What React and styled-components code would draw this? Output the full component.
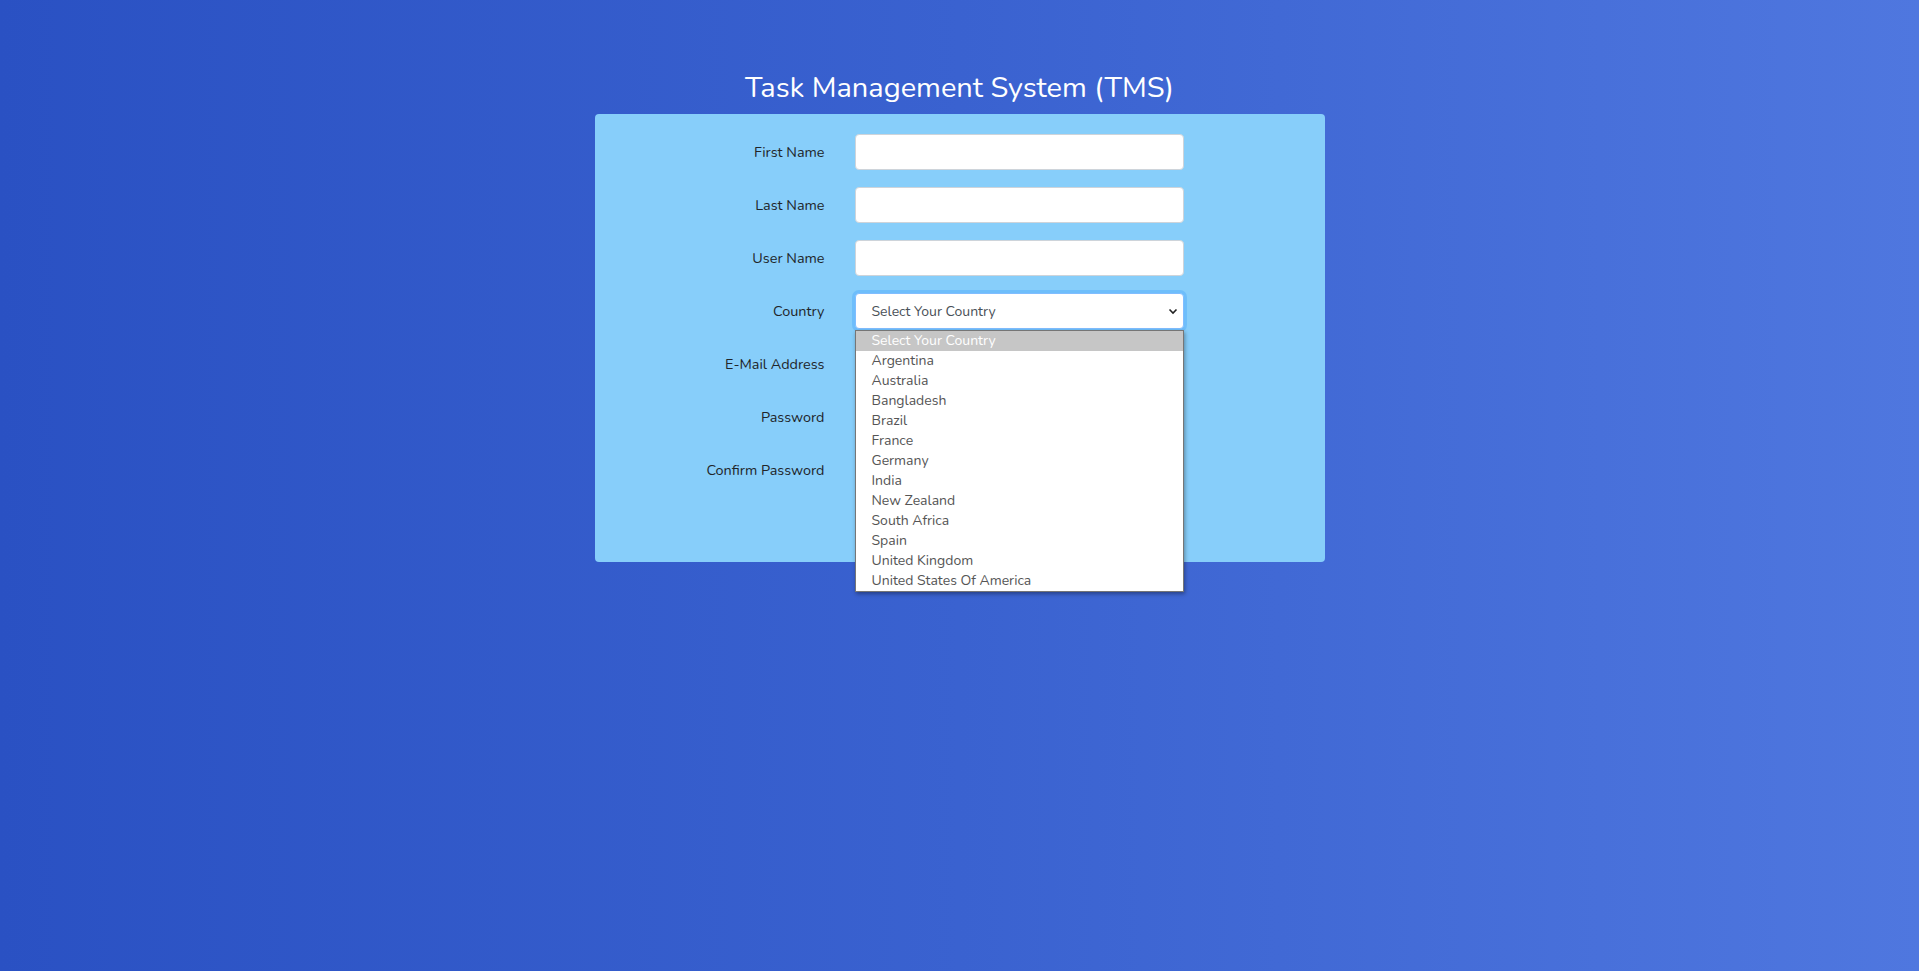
import React from "react";
import styled, { createGlobalStyle } from "styled-components";

const Global = createGlobalStyle`
  html, body { margin: 0; padding: 0; }
  body {
    font-family: Nunito, Lato, "Open Sans", "Liberation Sans", sans-serif;
    -webkit-font-smoothing: antialiased;
  }
  * { box-sizing: border-box; }
`;

const Page = styled.div`
  min-height: 971px;
  background: linear-gradient(to right, #2a51c3 0%, #3a62d0 50%, #4f77df 100%);
  padding-top: 70px;
  display: flex;
  flex-direction: column;
  align-items: center;
`;

const Title = styled.h1`
  margin: 0 0 8px;
  font-size: 29px;
  line-height: 36px;
  font-weight: 400;
  color: #ffffff;
`;

const Card = styled.form`
  width: 730px;
  height: 448px;
  background: #87cefa;
  border-radius: 4px;
  padding-top: 20px;
  display: flex;
  flex-direction: column;
  gap: 17px;
`;

const Row = styled.div`
  display: grid;
  grid-template-columns: 230px 329px;
  column-gap: 30px;
  align-items: center;
`;

const Label = styled.label`
  text-align: right;
  font-size: 14.4px;
  color: #212529;
`;

const Input = styled.input`
  height: 36px;
  width: 100%;
  border: 1px solid #ced4da;
  border-radius: 4px;
  background: #fff;
  padding: 0 15px;
  font-family: inherit;
  font-size: 14px;
  outline: none;
`;

const SelectWrap = styled.div`
  position: relative;
  width: 100%;
`;

const SelectBox = styled.div`
  height: 36px;
  border: 1px solid #80bdff;
  border-radius: 4px;
  background: #fff;
  box-shadow: 0 0 0 3px rgba(0, 123, 255, 0.18);
  padding: 0 5px 0 16px;
  display: flex;
  align-items: center;
  justify-content: space-between;
  font-size: 14px;
  color: #495057;
`;

const Chevron = styled.svg`
  width: 10px;
  height: 10px;
`;

const Dropdown = styled.ul`
  position: absolute;
  top: 37px;
  left: 0;
  right: 0;
  margin: 0;
  padding: 0;
  list-style: none;
  background: #fff;
  border: 1px solid #767676;
  box-shadow: 1px 2px 4px rgba(0, 0, 0, 0.35);
  z-index: 10;
`;

const Option = styled.li`
  height: 20px;
  line-height: 20px;
  padding-left: 16px;
  font-size: 14px;
  color: ${(p) => (p.$active ? "#ffffff" : "#555555")};
  background: ${(p) => (p.$active ? "#c6c6c6" : "transparent")};
`;

const countries = [
  "Argentina",
  "Australia",
  "Bangladesh",
  "Brazil",
  "France",
  "Germany",
  "India",
  "New Zealand",
  "South Africa",
  "Spain",
  "United Kingdom",
  "United States Of America",
];

const fields = [
  ["First Name", "text"],
  ["Last Name", "text"],
  ["User Name", "text"],
  ["Country", "select"],
  ["E-Mail Address", "email"],
  ["Password", "password"],
  ["Confirm Password", "password"],
];

export default function App() {
  return (
    <>
      <Global />
      <Page>
        <Title>Task Management System (TMS)</Title>
        <Card onSubmit={(e) => e.preventDefault()}>
          {fields.map(([label, type]) => (
            <Row key={label}>
              <Label>{label}</Label>
              {type === "select" ? (
                <SelectWrap>
                  <SelectBox>
                    <span>Select Your Country</span>
                    <Chevron viewBox="0 0 10 10">
                      <path d="M1.5 3.5 L5 7 L8.5 3.5" fill="none" stroke="#222" strokeWidth="1.6" />
                    </Chevron>
                  </SelectBox>
                  <Dropdown>
                    <Option $active>Select Your Country</Option>
                    {countries.map((c) => (
                      <Option key={c}>{c}</Option>
                    ))}
                  </Dropdown>
                </SelectWrap>
              ) : (
                <Input type={type} />
              )}
            </Row>
          ))}
        </Card>
      </Page>
    </>
  );
}
